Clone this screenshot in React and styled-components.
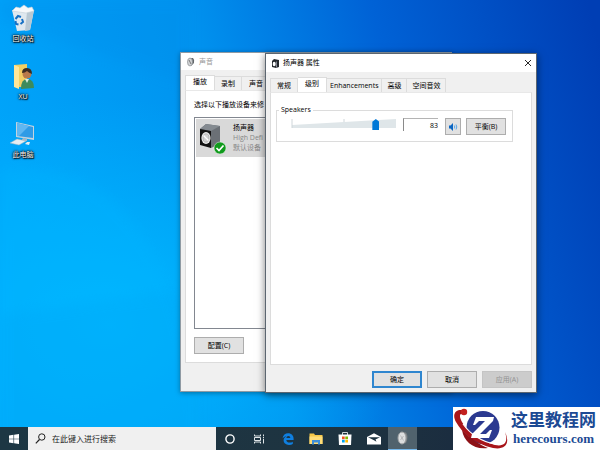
import React, { useState } from 'react';

import styled, { createGlobalStyle, css } from 'styled-components';

const GlobalStyle = createGlobalStyle`
  * {
    box-sizing: border-box;
  }

  body {
    margin: 0;
    color: #000;
    font-family: 'Open Sans', 'Noto Sans CJK SC', sans-serif;
    font-size: 7px;
    line-height: 10px;
  }

  button, input {
    font: inherit;
    color: inherit;
    margin: 0;
    padding: 0;
    border: 0;
    border-radius: 0;
    background: none;
  }

  svg {
    display: block;
  }
`;

const Desktop = styled.div`
  position: relative;
  display: flex;
  flex-direction: column;
  min-height: 100vh;
  overflow: hidden;
`;

const Workspace = styled.main`
  position: relative;
  flex: 1;
`;

const Wallpaper = styled.svg`
  position: absolute;
  inset: 0;
  width: 100%;
  height: 100%;
`;

const Shortcuts = styled.nav`
  position: relative;
  display: flex;
  flex-direction: column;
  gap: 18px;
  width: 46px;
  padding-top: 4px;
`;

const Shortcut = styled.button`
  display: flex;
  flex-direction: column;
  align-items: center;
  gap: 2px;
  color: white;
  text-shadow: 0 0 1px #000, 0 0 2px #000, 1px 1px 1px #000, 0 0 3px #000;
`;

const Window = styled.section`
  position: absolute;
  left: ${props => props.$left}px;
  top: ${props => props.$top}px;
  width: 272px;
  height: 340px;
  display: flex;
  flex-direction: column;
  padding: 0 4px;
  background: #f0f0f0;
  border: 1px solid ${props => (props.$active ? '#5c6670' : '#8f9aa3')};
  box-shadow: ${props => (props.$active ? '0 2px 8px rgba(0, 0, 0, 0.5)' : '0 1px 5px rgba(0, 0, 0, 0.35)')};
`;

const TitleBar = styled.header`
  display: flex;
  align-items: center;
  gap: 3px;
  height: ${props => (props.$active ? 18 : 17)}px;
  margin: 0 -4px 5px;
  padding: 0 4px 0 5px;
  background: white;
  color: ${props => (props.$active ? '#000' : '#999')};

  h1 {
    flex: 1;
    margin: 0;
    font-size: 7px;
    font-weight: normal;
  }
`;

const Tabs = styled.div`
  display: flex;
  align-items: flex-end;
  height: 15px;
`;

const Tab = styled.button`
  height: 14px;
  padding: 0 ${props => props.$pad}px;
  border: 1px solid #dcdcdc;
  border-bottom: 0;
  border-left: 0;
  white-space: nowrap;

  &:first-child {
    border-left: 1px solid #dcdcdc;
  }

  ${props => props.$active && css`
    height: 15px;
    padding-bottom: 3px;
    background: white;
  `}
`;

const Panel = styled.div`
  flex: 1;
  display: flex;
  flex-direction: column;
  align-items: flex-start;
  background: white;
  border: 1px solid #dcdcdc;
  border-top-color: #e8e8e8;
`;

const SoundPanel = styled(Panel)`
  padding: 9px 8px 8px;
  margin-bottom: 28px;

  p {
    margin: 0 0 7px;
  }
`;

const LevelsPanel = styled(Panel)`
  padding: 12px 18px 0 5px;
`;

const DeviceList = styled.ul`
  flex: 1;
  align-self: stretch;
  margin: 0 0 8px;
  padding: 1px;
  border: 1px solid #828790;
  list-style: none;
`;

const Device = styled.li`
  display: flex;
  align-items: center;
  gap: 6px;
  height: 38px;
  padding-left: 3px;
  background: #d9d9d9;
  color: #888;

  strong {
    display: block;
    color: #000;
    font-weight: normal;
  }
`;

const Button = styled.button`
  width: ${props => props.$width || 50}px;
  height: 17px;
  display: flex;
  align-items: center;
  justify-content: center;
  border: 1px solid #adadad;
  background: #e1e1e1;

  ${props => props.$primary && css`
    border: 2px solid #2f86cf;
  `}

  &:disabled {
    border-color: #c4c4c4;
    background: #cccccc;
    color: #929292;
  }
`;

const Actions = styled.footer`
  display: flex;
  justify-content: flex-end;
  gap: 5px;
  padding: 6px 0 4px;
`;

const Group = styled.fieldset`
  align-self: stretch;
  display: flex;
  align-items: flex-start;
  gap: 5px;
  height: 37px;
  min-width: 0;
  margin: 0;
  padding: 3px 6px 0 14px;
  border: 1px solid #dcdcdc;

  legend {
    margin-left: -12px;
    padding: 0 2px;
    font-size: 7px;
  }
`;

const Volume = styled.div`
  display: grid;
  flex: 1;
  height: 13px;
  margin-right: 2px;

  > * {
    grid-area: 1 / 1;
    width: 100%;
    height: 13px;
  }
`;

const Slider = styled.input`
  appearance: none;

  &::-webkit-slider-thumb {
    appearance: none;
    width: 7px;
    height: 11px;
    background: #0078d7;
    clip-path: polygon(50% 0, 100% 25%, 100% 100%, 0 100%, 0 25%);
  }
`;

const Level = styled.input`
  width: 35px;
  height: 13px;
  margin-right: 2px;
  text-align: right;
  border-left: 1px solid #8a8a8a;
  border-top: 1px solid #b4b4b4;
`;

const Taskbar = styled.footer`
  position: relative;
  display: flex;
  height: 23px;
  background: linear-gradient(90deg, #1d3744, #1e3340 60%, #16233f);
`;

const StartButton = styled.button`
  display: grid;
  place-items: center;
  width: 28px;
`;

const Search = styled.label`
  display: flex;
  align-items: center;
  gap: 6px;
  width: 188px;
  padding-left: 7px;
  background: #f0f0f0;

  input {
    flex: 1;
    min-width: 0;
    font-size: 8px;
    outline: none;
  }

  input::placeholder {
    color: #222;
    opacity: 1;
  }
`;

const Apps = styled.div`
  display: grid;
  grid-template-columns: repeat(7, 1fr);
  width: 201px;
`;

const AppButton = styled.button`
  display: grid;
  place-items: center;

  ${props => props.$active && css`
    background: #50626d;
    border-bottom: 1px solid #76b9ed;
  `}
`;

const SiteBadge = styled.a`
  position: absolute;
  right: 0;
  bottom: 0;
  display: flex;
  align-items: center;
  width: 147px;
  height: 43px;
  background: white;
  color: #1c4a94;
  text-decoration: none;
`;

const SiteName = styled.span`
  display: flex;
  flex-direction: column;
  align-items: center;
  font-family: 'Liberation Serif', 'Noto Sans CJK SC', serif;
  font-size: 17px;
  font-weight: bold;
  line-height: 20px;
  white-space: nowrap;

  small {
    font-size: 13px;
    line-height: 15px;
  }
`;

const RecycleBin = () => (
  <svg width="28" height="28" viewBox="0 0 28 28">
    <path d="M3 6 L25 6 L21 26 L8 27 Z" fill="#dfe8ef" />
    <path d="M18 8 L25 6 L21 26 L16 27 Z" fill="#b9c8d3" />
    <path d="M3 7 L7 3 L11 4 L15 1 L19 4 L23 3 L25 7 L17 9 Z" fill="#f6f8fa" stroke="#c5d0d8" strokeWidth=".6" />
    <path d="M6.5 15 L9 12 L12 13 M13 15 L14 18 L11.5 20 M9.5 20.5 L7 20 L6.5 17" fill="none" stroke="#1670c4" strokeWidth="2" />
  </svg>
);

const UserFolder = () => (
  <svg width="28" height="28" viewBox="0 0 28 28">
    <path d="M5 3 L18 2 V25 L5 25 Z" fill="#f3cf63" />
    <path d="M5 3 L10 5 V27 L5 25 Z" fill="#ffe699" />
    <path d="M12 27 Q12 17 18 17 Q25 17 25 26 Z" fill="#3d8b5c" />
    <path d="M16 17 L18 21 L20 17 Z" fill="#d9efe2" />
    <circle cx="18" cy="12" r="4.5" fill="#b97a4b" />
    <path d="M13 11 Q13 6 18 6 Q23 6 23 12 Q20 11 18 9 Q16 11 13 11 Z" fill="#3a2c22" />
  </svg>
);

const Computer = () => (
  <svg width="28" height="28" viewBox="0 0 28 28">
    <path d="M7 2 L25 6 V20 L7 17 Z" fill="#c3d3de" />
    <path d="M8 3 L24 7 V18 L8 16 Z" fill="#2f9be6" />
    <path d="M8 3 L20 6 L10 16 L8 16 Z" fill="#5fb7f2" />
    <path d="M14 18 L18 19 V21 L12 21 Z" fill="#a9bac6" />
    <path d="M1 23 L8 19 L17 21 L10 25 Z" fill="#e6edf2" stroke="#9fb2bf" strokeWidth=".5" />
    <path d="M18 22 L21 22 L20 25 L16 24 Z" fill="#e6edf2" />
  </svg>
);

const SpeakerIcon = () => (
  <svg width="28" height="32" viewBox="0 0 28 32">
    <path d="M1 7 L7 2 L21 4 V22 L12 26 Z" fill="#6b7076" />
    <path d="M1 7 L7 2 L21 4 L12 9 Z" fill="#858b91" />
    <path d="M1 7 L12 9 V26 L1 23 Z" fill="#121212" />
    <ellipse cx="7" cy="16" rx="4.6" ry="6" fill="#ececec" />
    <ellipse cx="7" cy="16" rx="3" ry="4.2" fill="#d2d2d2" stroke="#a6a6a6" strokeWidth=".7" />
    <path d="M4.5 13.5 L9.5 18.5" stroke="#fff" strokeWidth="1.3" />
    <circle cx="21" cy="26" r="6" fill="#109a1c" stroke="#e8f5e9" strokeWidth=".5" />
    <path d="M17.5 26 L20 28.5 L24.5 23.5" fill="none" stroke="#fff" strokeWidth="1.7" />
  </svg>
);

const SoundIcon = () => (
  <svg width="10" height="10" viewBox="0 0 10 10">
    <path d="M3 1 L7 1 Q9 3 8 6 L5 9 Z" fill="#62676b" />
    <ellipse cx="4" cy="5" rx="2.5" ry="4" fill="#d2d4d6" stroke="#8a8e91" strokeWidth=".7" />
    <path d="M3 3 L5 7" stroke="#777" />
  </svg>
);

const DeviceIcon = () => (
  <svg width="9" height="9" viewBox="0 0 9 9">
    <path d="M1 2 L3 0 L8 1 V8 L5 9 L1 8 Z" fill="#24282c" />
    <ellipse cx="3.2" cy="5" rx="1.5" ry="2.3" fill="#fff" />
    <path d="M5.5 2.5 V8.5" stroke="#aab" strokeWidth=".7" />
  </svg>
);

const SpeakerGlyph = () => (
  <svg width="10" height="10" viewBox="0 0 10 10">
    <path d="M1 3.5 H2.5 L5 1 V9 L2.5 6.5 H1 Z" fill="#0b66c3" />
    <path d="M6.3 3.5 Q7.3 5 6.3 6.5 M8 2.5 Q9.6 5 8 7.5" fill="none" stroke="#4a9fe8" strokeWidth=".9" />
  </svg>
);

const CloseGlyph = () => (
  <svg width="8" height="8" viewBox="0 0 8 8">
    <path d="M1 1 L7 7 M7 1 L1 7" stroke="#111" strokeWidth=".9" />
  </svg>
);

const StartGlyph = () => (
  <svg width="10" height="10" viewBox="0 0 10 10" fill="#fff">
    <path d="M0 1.5 L4.5 .8 V4.7 H0 Z M5.1 .7 L10 0 V4.7 H5.1 Z M0 5.3 H4.5 V9.2 L0 8.5 Z M5.1 5.3 H10 V10 L5.1 9.3 Z" />
  </svg>
);

const SearchGlyph = () => (
  <svg width="11" height="11" viewBox="0 0 11 11" fill="none" stroke="#222">
    <circle cx="6.8" cy="4" r="3.2" />
    <path d="M4.5 6.5 L.8 10.3" strokeWidth="1.2" />
  </svg>
);

const CortanaGlyph = () => (
  <svg width="12" height="12" viewBox="0 0 12 12">
    <circle cx="6" cy="6" r="4.1" fill="none" stroke="#fff" strokeWidth="1.4" />
  </svg>
);

const TaskViewGlyph = () => (
  <svg width="12" height="12" viewBox="0 0 12 12" fill="none" stroke="#dfe5e8">
    <path d="M1.5 1.5 V3 H7.5 V1.5 M1.5 10.5 V9 H7.5 V10.5 M1.5 4.5 H7.5 V7.5 H1.5 Z M10.5 1.5 V3 M10.5 6 V10.5" />
    <path d="M10 4.5 H11" strokeWidth="1.5" />
  </svg>
);

const EdgeGlyph = () => (
  <svg width="12" height="12" viewBox="0 0 12 12">
    <path
      d="M.5 5.5 C1 2 3.3 .3 6.2 .3 C9.5 .3 11.6 2.7 11.6 5.8 V7 H4.3 C4.5 9 6 9.6 7.5 9.6 C8.9 9.6 10 9.2 10.8 8.7 V11 C9.8 11.6 8.5 11.9 7 11.9 C3.7 11.9 1.6 10 1.6 7.3 C1.6 5.2 2.8 3.9 4.5 3.2 C2.7 3.4 1.3 4.2 .5 5.5 Z M4.4 5 H8.3 C8.3 3.6 7.6 2.9 6.4 2.9 C5.2 2.9 4.6 3.8 4.4 5 Z"
      fill="#0f7fe0"
      fillRule="evenodd"
    />
  </svg>
);

const ExplorerGlyph = () => (
  <svg width="14" height="12" viewBox="0 0 14 12">
    <path d="M.5 .5 H5 L6 2 H13.5 V11 H.5 Z" fill="#f5c749" />
    <path d="M.5 3.5 H13.5 V11 H.5 Z" fill="#ffdd78" />
    <path d="M3 11.5 V7 H11 V11.5 H9 V9.5 H5 V11.5 Z" fill="#3f8fd8" />
  </svg>
);

const StoreGlyph = () => (
  <svg width="14" height="15" viewBox="0 0 14 15">
    <path d="M4.5 4 V1.5 H9.5 V4" fill="none" stroke="#cfd6da" />
    <path d="M.5 3.5 H13.5 L13 14 H1 Z" fill="#fff" />
    <path d="M4 5.5 H6.7 V8.2 H4 Z" fill="#f25022" />
    <path d="M7.3 5.5 H10 V8.2 H7.3 Z" fill="#7fba00" />
    <path d="M4 8.8 H6.7 V11.5 H4 Z" fill="#00a4ef" />
    <path d="M7.3 8.8 H10 V11.5 H7.3 Z" fill="#ffb900" />
  </svg>
);

const MailGlyph = () => (
  <svg width="14" height="12" viewBox="0 0 14 12">
    <path d="M0 4 L7 .3 L14 4 V11.5 H0 Z" fill="#fff" />
    <path d="M1 4.3 H13 L8.5 6.5 L9.5 8.8 L6.5 7 Z" fill="#1e3340" />
  </svg>
);

const SpeakerAppGlyph = () => (
  <svg width="12" height="14" viewBox="0 0 12 14">
    <path d="M5 1 L9 1.5 Q12 6 9 12 L6 13 Z" fill="#7b8083" />
    <ellipse cx="5" cy="7" rx="4" ry="6" fill="#dcdedf" stroke="#9da1a4" />
    <path d="M3.5 4.5 L6.5 9.5 M6.5 5 L3.5 9" stroke="#a5a8aa" strokeWidth=".7" />
  </svg>
);

const BadgeLogo = () => (
  <svg width="58" height="43" viewBox="0 0 58 43">
    <circle cx="30" cy="20.5" r="16.5" fill="#2b3990" />
    <path d="M9 3 C2 2 -1 8 3 15 C9 26 22 37 40 41 C51 43 58 38 52 25 C55 34 53 40 42 38 C27 34 14 24 9 15 C6 9 6 6 11 7 Z" fill="#a8151a" />
    <path d="M9 23 C11 35 21 43 35 41 C27 38 18 32 9 23 Z" fill="#8e1116" />
    <path d="M10 17 C17 27 29 35 42 37" fill="none" stroke="#fff" strokeWidth="1.2" />
    <circle cx="11" cy="5" r="3.2" fill="#c3201f" />
    <path d="M23 10 H41 L40 14 L27 27 H33 L37 23 H39 L36 31 H18 L19 27 L32 14 H26 L22 18 H20 Z" fill="#fff" />
  </svg>
);

const shortcuts = [
  { label: '回收站', Icon: RecycleBin },
  { label: 'XU', Icon: UserFolder },
  { label: '此电脑', Icon: Computer },
];

const apps = [
  { label: 'Cortana', Icon: CortanaGlyph },
  { label: 'Task View', Icon: TaskViewGlyph },
  { label: 'Edge', Icon: EdgeGlyph },
  { label: 'Explorer', Icon: ExplorerGlyph },
  { label: 'Store', Icon: StoreGlyph },
  { label: 'Mail', Icon: MailGlyph },
  { label: 'Sound', Icon: SpeakerAppGlyph, active: true },
];

const Background = () => (
  <Wallpaper viewBox="0 0 600 450" preserveAspectRatio="none">
    <defs>
      <linearGradient id="sky" x1="0" y1=".3" x2="1" y2=".1">
        <stop offset="0" stopColor="#00a4fa" />
        <stop offset=".35" stopColor="#0093ef" />
        <stop offset=".65" stopColor="#0062d6" />
        <stop offset="1" stopColor="#003eb4" />
      </linearGradient>
      <radialGradient id="glow" cx=".18" cy=".72" r=".5">
        <stop offset="0" stopColor="#00b8ff" />
        <stop offset="1" stopColor="#00b8ff" stopOpacity="0" />
      </radialGradient>
      <filter id="soft">
        <feGaussianBlur stdDeviation="6" />
      </filter>
    </defs>
    <path d="M0 0 H600 V450 H0 Z" fill="url(#sky)" />
    <path d="M0 0 H600 V450 H0 Z" fill="url(#glow)" />
    <path d="M0 20 L190 85 V0 H0 Z" fill="#008be8" opacity=".25" filter="url(#soft)" />
    <path d="M0 170 Q90 160 140 230 T200 450 H0 Z" fill="#00b4ff" opacity=".35" filter="url(#soft)" />
    <path d="M0 315 L200 288 V450 H0 Z" fill="#00a6f6" opacity=".3" filter="url(#soft)" />
  </Wallpaper>
);

const SoundWindow = () => (
  <Window $left={180} $top={52} aria-label="声音">
    <TitleBar>
      <SoundIcon />
      <h1>声音</h1>
    </TitleBar>
    <Tabs role="tablist">
      <Tab role="tab" $pad={7} $active>播放</Tab>
      <Tab role="tab" $pad={6}>录制</Tab>
      <Tab role="tab" $pad={7}>声音</Tab>
    </Tabs>
    <SoundPanel>
      <p>选择以下播放设备来修</p>
      <DeviceList>
        <Device>
          <SpeakerIcon />
          <div>
            <strong>扬声器</strong>
            <div>High Defi</div>
            <div>默认设备</div>
          </div>
        </Device>
      </DeviceList>
      <Button>配置(C)</Button>
    </SoundPanel>
  </Window>
);

const PropertiesWindow = () => {
  const [volume, setVolume] = useState(83);
  const onChange = e => setVolume(Number(e.target.value) || 0);

  return (
    <Window $left={265} $top={53} $active aria-label="扬声器 属性">
      <TitleBar $active>
        <DeviceIcon />
        <h1>扬声器 属性</h1>
        <button aria-label="关闭"><CloseGlyph /></button>
      </TitleBar>
      <Tabs role="tablist">
        <Tab role="tab" $pad={6}>常规</Tab>
        <Tab role="tab" $pad={7} $active>级别</Tab>
        <Tab role="tab" $pad={3}>Enhancements</Tab>
        <Tab role="tab" $pad={5}>高级</Tab>
        <Tab role="tab" $pad={5}>空间音效</Tab>
      </Tabs>
      <LevelsPanel>
        <Group>
          <legend>Speakers</legend>
          <Volume>
            <svg viewBox="0 0 105 13" preserveAspectRatio="none">
              <path d="M1 7 L105 1 V10 H1 Z" fill="#dfe6e9" />
              <path d="M1 1 V10 M53 1 V4" stroke="#cfd6da" />
            </svg>
            <Slider type="range" min="0" max="100" value={volume} onChange={onChange} aria-label="Speakers" />
          </Volume>
          <Level type="text" value={volume} onChange={onChange} aria-label="音量" />
          <Button $width={16} aria-label="静音"><SpeakerGlyph /></Button>
          <Button $width={40}>平衡(B)</Button>
        </Group>
      </LevelsPanel>
      <Actions>
        <Button $primary>确定</Button>
        <Button>取消</Button>
        <Button disabled>应用(A)</Button>
      </Actions>
    </Window>
  );
};

const App = () => (
  <Desktop>
    <GlobalStyle />
    <Background />
    <Workspace>
      <Shortcuts>
        {shortcuts.map(({ label, Icon }) => (
          <Shortcut key={label}>
            <Icon />
            {label}
          </Shortcut>
        ))}
      </Shortcuts>
      <SoundWindow />
      <PropertiesWindow />
    </Workspace>
    <Taskbar>
      <StartButton aria-label="开始"><StartGlyph /></StartButton>
      <Search>
        <SearchGlyph />
        <input type="text" placeholder="在此键入进行搜索" aria-label="搜索" />
      </Search>
      <Apps>
        {apps.map(({ label, Icon, active }) => (
          <AppButton key={label} $active={active} aria-label={label}>
            <Icon />
          </AppButton>
        ))}
      </Apps>
    </Taskbar>
    <SiteBadge href="#">
      <BadgeLogo />
      <SiteName>
        这里教程网
        <small>herecours.com</small>
      </SiteName>
    </SiteBadge>
  </Desktop>
);

export default App;
